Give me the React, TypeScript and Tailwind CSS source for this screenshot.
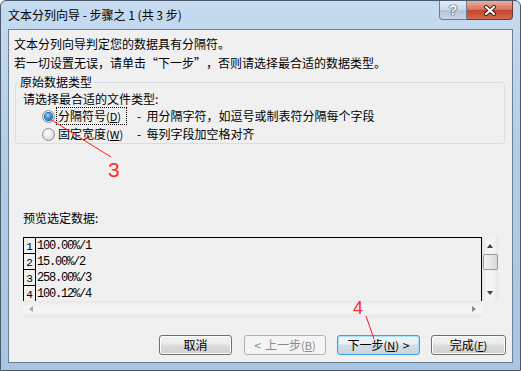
import type { ReactNode } from "react";

const cjk = "font-['Noto_Sans_CJK_SC','Liberation_Sans',sans-serif]";
const mono = "font-['Liberation_Mono','Noto_Sans_CJK_SC',monospace]";

function Key({ k }: { k: string }) {
  return (
    <span className="text-[11px]">
      (<span className="underline">{k}</span>)
    </span>
  );
}

function Radio({ checked }: { checked?: boolean }) {
  return (
    <span className="grid size-[13px] shrink-0 place-items-center rounded-full border border-[#8e8f8f] bg-[radial-gradient(circle_at_40%_35%,#ffffff,#e2e2e2_60%,#cfcfcf)]">
      {checked && (
        <span className="size-[7px] rounded-full bg-[radial-gradient(circle_at_40%_35%,#9fd8ff,#2a86d1_55%,#0b4f95)] shadow-[0_0_0_1px_#1b5e9c]" />
      )}
    </span>
  );
}

type BtnKind = "normal" | "disabled" | "default";

function WinButton({ kind = "normal", width, children }: { kind?: BtnKind; width: string; children: ReactNode }) {
  const look =
    kind === "disabled"
      ? "border-[#adb2b5] bg-[#f4f4f4] text-[#8a8a8a]"
      : kind === "default"
        ? "border-[#3c9ee0] bg-[linear-gradient(#f2f6f9_0%,#e8eef3_45%,#d6dee5_50%,#cbd4dc_100%)] shadow-[inset_0_0_0_1px_#a8e0fb] text-black"
        : "border-[#707070] bg-[linear-gradient(#f2f2f2_0%,#ebebeb_45%,#dddddd_50%,#cfcfcf_100%)] shadow-[inset_0_0_0_1px_#fcfcfc] text-black";
  return (
    <button
      className={`flex h-[20px] items-center justify-center rounded-[3px] border text-[12px] leading-[18px] ${look} ${width}`}
      type="button"
    >
      {children}
    </button>
  );
}

const rows = ["100.00%/1", "15.00%/2", "258.00%/3", "100.12%/4"];

export default function App() {
  return (
    <div
      className={`relative h-[371px] w-[521px] overflow-hidden rounded-t-[6px] border border-[#4a5a6c] bg-[linear-gradient(180deg,#c6dbf0_0%,#b3cde8_40%,#a9c5e4_100%)] text-black ${cjk}`}
    >
      {/* title bar */}
      <div className="flex h-[28px] items-start">
        <div className="flex-1 pl-[7px] pt-[5px] text-[12px] leading-[18px]">文本分列向导 - 步骤之 1 (共 3 步)</div>
        <div className="mr-[7px] flex">
          <div className="grid h-[19px] w-[28px] place-items-center rounded-bl-[4px] border border-t-0 border-[#6b7c90] bg-[linear-gradient(#e3ecf5_0%,#c8d6e6_50%,#b1c3d8_51%,#c9d8e8_100%)]">
            <span className="font-['Liberation_Sans',sans-serif] text-[14px] leading-[14px] font-bold text-white [text-shadow:0_0_1px_#2b3440,0_0_1px_#2b3440,0_0_1px_#2b3440]">
              ?
            </span>
          </div>
          <div className="grid h-[19px] w-[46px] place-items-center rounded-br-[4px] border border-l-0 border-t-0 border-[#6b3a32] bg-[linear-gradient(#eab0a2_0%,#d8715b_48%,#c7432d_52%,#d26a4f_100%)]">
            <svg height="11" viewBox="0 0 14 11" width="14">
              <path d="M3 2 L11 9 M11 2 L3 9" fill="none" stroke="#3b1a14" strokeLinecap="round" strokeWidth="4" />
              <path d="M3 2 L11 9 M11 2 L3 9" fill="none" stroke="#ffffff" strokeLinecap="round" strokeWidth="2.2" />
            </svg>
          </div>
        </div>
      </div>

      {/* client area */}
      <div className="mx-[7px] flex h-[334px] flex-col border border-[#6e8193] bg-[#f0f0f0] text-[12px]">
        <div className="pl-[5px] pt-[4px] leading-[19px]">
          <p>文本分列向导判定您的数据具有分隔符。</p>
          <p>
            若一切设置无误，请单击<span className="inline-block w-[12px] text-right">“</span>下一步
            <span className="inline-block w-[12px] text-left">”</span>，否则请选择最合适的数据类型。
          </p>
        </div>

        <fieldset className="ml-[6px] mr-[7px] mt-[2px] rounded-[3px] border border-[#d5dfe5] pb-0">
          <legend className="ml-[2px] px-[2px] leading-[16px]">原始数据类型</legend>
          <div className="mt-[1px] pl-[7px] leading-[16px]">请选择最合适的文件类型:</div>
          <div className="flex h-[18px] items-center pl-[26px]">
            <Radio checked />
            <span className="ml-[1px] flex h-[18px] w-[71px] items-center border border-dotted border-black pl-[1px] leading-[16px]">
              分隔符号 <Key k="D" />
            </span>
            <span className="ml-[10px]">-&nbsp; 用分隔字符，如逗号或制表符分隔每个字段</span>
          </div>
          <div className="flex h-[18px] items-center pl-[26px]">
            <Radio />
            <span className="ml-[1px] flex h-[18px] w-[71px] items-center border border-transparent pl-[1px] leading-[16px]">
              固定宽度 <Key k="W" />
            </span>
            <span className="ml-[10px]">-&nbsp; 每列字段加空格对齐</span>
          </div>
        </fieldset>

        <div className="ml-[14px] mt-[66px] leading-[16px]">预览选定数据:</div>

        {/* preview */}
        <div className="ml-[14px] mt-[11px] grid w-[475px] grid-cols-[459px_16px] grid-rows-[64px_16px]">
          <div className="overflow-hidden border border-b-0 border-black bg-[#f0f0f0]">
            {rows.map((r, i) => (
              <div className="flex h-[16px]" key={r}>
                <div
                  className={`flex w-[12px] shrink-0 items-end justify-center border-b border-r border-black text-[11px] leading-[12px] ${mono}`}
                >
                  {i + 1}
                </div>
                <div className={`flex items-center pl-[1px] text-[12px] leading-[16px] tracking-[-1.2px] ${mono}`}>{r}</div>
              </div>
            ))}
          </div>
          <div className="flex flex-col items-center bg-[linear-gradient(90deg,#e6e6e6,#f3f3f3_30%,#f3f3f3_70%,#e6e6e6)]">
            <div className="grid h-[17px] w-full place-items-center">
              <span className="size-0 border-x-[3.5px] border-b-[4px] border-x-transparent border-b-[#404040]" />
            </div>
            <div className="h-[16px] w-[15px] rounded-[2px] border border-[#979797] bg-[linear-gradient(90deg,#f5f5f5,#e5e5e5_50%,#d9d9d9)]" />
            <div className="flex-1" />
            <div className="grid h-[17px] w-full place-items-center">
              <span className="size-0 border-x-[3.5px] border-t-[4px] border-x-transparent border-t-[#404040]" />
            </div>
          </div>
          <div className="flex items-center justify-between bg-[linear-gradient(#e8e8e8,#f4f4f4_30%,#f4f4f4_70%,#e8e8e8)] px-[6px]">
            <span className="size-0 border-y-[3.5px] border-r-[4px] border-y-transparent border-r-[#a8a8a8]" />
            <span className="size-0 border-y-[3.5px] border-l-[4px] border-y-transparent border-l-[#8c8c8c]" />
          </div>
          <div className="bg-[#f0f0f0]" />
        </div>

        {/* buttons */}
        <div className="mt-[18px] flex justify-end gap-[11px] pr-[6px]">
          <WinButton width="w-[73px] mr-[1px]">取消</WinButton>
          <WinButton kind="disabled" width="w-[82px]">
            <span className="mr-[4px]">&lt;</span>上一步 <Key k="B" />
          </WinButton>
          <WinButton kind="default" width="w-[83px]">
            下一步 <Key k="N" />
            <span className="ml-[4px]">&gt;</span>
          </WinButton>
          <WinButton width="w-[75px]">
            完成 <Key k="F" />
          </WinButton>
        </div>
      </div>

      {/* red callouts drawn on top of the screenshot */}
      <svg className="pointer-events-none absolute left-0 top-0" height="371" width="521">
        <line stroke="#ff1a1a" strokeWidth="1" x1="49" x2="110" y1="118" y2="156" />
        <text fill="#ff2a2a" fontFamily="Liberation Sans, sans-serif" fontSize="21" x="107" y="176">
          3
        </text>
        <line stroke="#ff1a1a" strokeWidth="1" x1="365" x2="373" y1="315" y2="338" />
        <text fill="#ff2a2a" fontFamily="Liberation Sans, sans-serif" fontSize="18" x="352" y="313">
          4
        </text>
      </svg>
    </div>
  );
}
